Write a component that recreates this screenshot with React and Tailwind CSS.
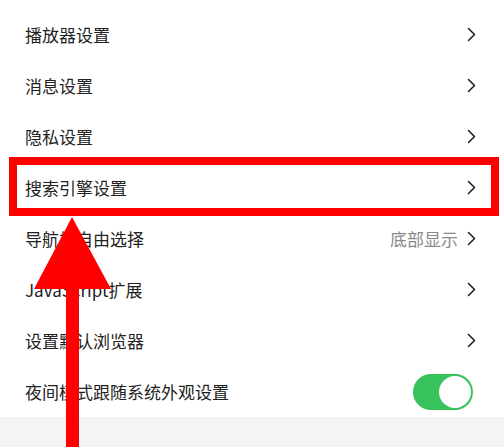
import React from 'react';

const rows = [
  { label: '播放器设置' },
  { label: '消息设置' },
  { label: '隐私设置' },
  { label: '搜索引擎设置' },
  { label: '导航栏自由选择', value: '底部显示' },
  { label: 'JavaScript扩展' },
  { label: '设置默认浏览器' },
  { label: '夜间模式跟随系统外观设置', toggle: true },
];

function Chevron() {
  return (
    <svg width="9" height="15" viewBox="0 0 9 15" className="shrink-0">
      <polyline points="1.5,1.5 7.5,7.5 1.5,13.5" fill="none" stroke="#1a1a1a" strokeWidth="1.5" strokeLinecap="round" strokeLinejoin="round" />
    </svg>
  );
}

function Toggle() {
  return (
    <div className="w-[60px] h-[36px] rounded-full bg-[#37c25c] flex items-center justify-end p-[2px]">
      <div className="w-[32px] h-[32px] rounded-full bg-white"></div>
    </div>
  );
}

export default function App() {
  return (
    <div
      className="relative w-[504px] h-[447px] overflow-hidden bg-white"
      style={{ fontFamily: '"Noto Sans CJK SC", "Noto Sans", sans-serif' }}
    >
      <div className="pt-[9px]">
        {rows.map((row) => (
          <div key={row.label} className="h-[51px] flex items-center justify-between pl-[25px] pr-[28px]">
            <span className="text-[17px] text-[#222]">{row.label}</span>
            {row.toggle ? (
              <div className="mr-[3px]"><Toggle /></div>
            ) : (
              <div className="flex items-center gap-[9px]">
                {row.value && <span className="text-[17px] text-[#8a8a8a]">{row.value}</span>}
                <Chevron />
              </div>
            )}
          </div>
        ))}
      </div>
      <div className="h-[30px] bg-[#f4f4f4]"></div>

      {/* annotation: red box */}
      <div className="absolute left-[9px] top-[157px] w-[490px] h-[59px] border-[8px] border-[#ff0000]"></div>

      {/* annotation: red arrow */}
      <svg className="absolute left-0 top-0" width="504" height="447" viewBox="0 0 504 447">
        <polygon points="72,217 111,289 34,289" fill="#ff0000" />
        <rect x="66" y="288" width="13" height="160" fill="#ff0000" />
      </svg>
    </div>
  );
}
